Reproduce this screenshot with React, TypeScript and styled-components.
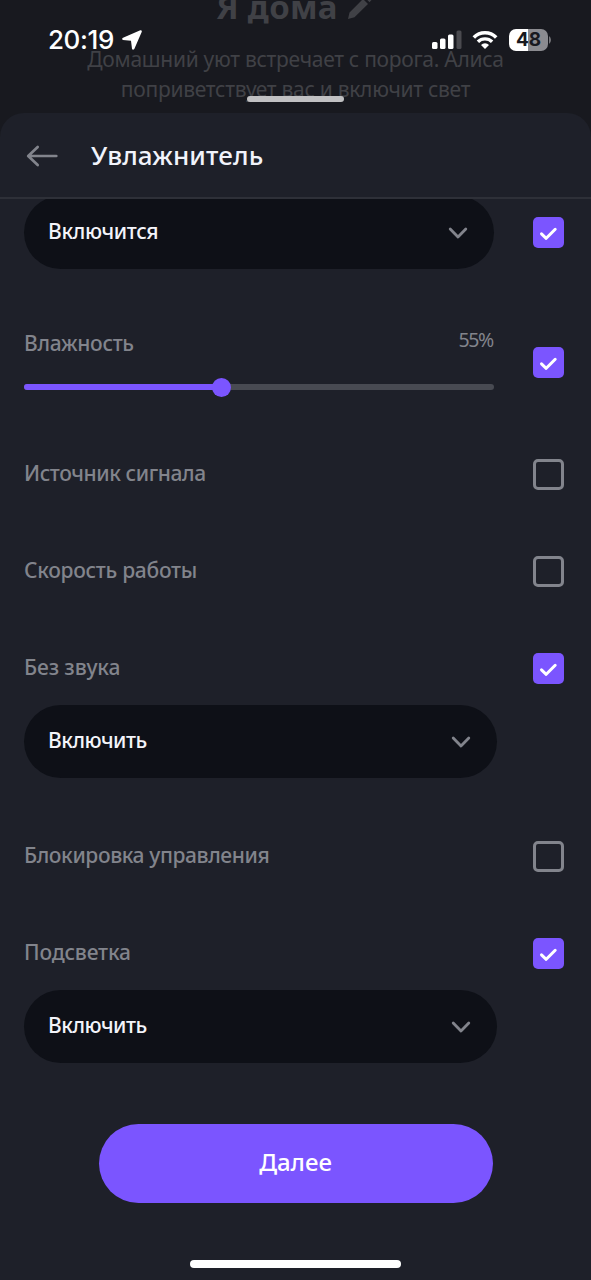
import React from "react";
import styled, { createGlobalStyle } from "styled-components";

const GlobalStyle = createGlobalStyle`
  * { box-sizing: border-box; }
  body { margin: 0; background: #18191f; }
`;

const Screen = styled.div`
  position: relative;
  display: flex;
  flex-direction: column;
  width: 591px;
  height: 1280px;
  overflow: hidden;
  background: #18191f;
  font-family: "Noto Sans", "Open Sans", sans-serif;
  font-weight: 500;
`;

const Backdrop = styled.div`
  position: relative;
  height: 113px;
  flex: none;
  text-align: center;
  color: #404146;
`;

const SceneTitle = styled.div`
  display: flex;
  justify-content: center;
  align-items: center;
  gap: 9px;
  height: 42px;
  margin: -14px 3px 0 0;
  font-size: 33px;
  font-weight: 700;
  line-height: 42px;
  letter-spacing: 0.3px;
`;

const SceneText = styled.div`
  height: 30px;
  font-size: 21px;
  font-weight: 400;
  line-height: 30px;
  letter-spacing: -0.28px;
  white-space: nowrap;
`;

const SceneCopy = styled.div`
  margin-top: 16px;
`;

const StatusBar = styled.div`
  position: absolute;
  inset: 24px 40px auto 48px;
  display: flex;
  align-items: center;
  height: 32px;
  color: #fff;
`;

const Clock = styled.span`
  font-family: Inter, sans-serif;
  font-size: 26px;
  font-weight: 550;
  line-height: 32px;
  letter-spacing: -0.4px;
  margin-right: 8px;
`;

const StatusIcons = styled.div`
  display: flex;
  align-items: center;
  margin-left: auto;
`;

const WifiIcon = styled.svg`
  margin-left: 10px;
`;

const Battery = styled.div`
  display: flex;
  align-items: center;
  justify-content: center;
  width: 39px;
  height: 22px;
  margin: 0 1px 0 11px;
  border-radius: 7px;
  background: linear-gradient(90deg, #fff 49%, #8b8b90 49%);
  color: #18191f;
  font-family: Inter, sans-serif;
  font-size: 19px;
  font-weight: 650;
  line-height: 22px;
`;

const Grabber = styled.div`
  position: absolute;
  left: 247px;
  top: 96px;
  width: 97px;
  height: 6px;
  border-radius: 3px;
  background: #c0c0c2;
`;

const Sheet = styled.main`
  display: flex;
  flex-direction: column;
  flex: 1;
  border-radius: 24px 24px 0 0;
  background: #1e2029;
  overflow: hidden;
`;

const Header = styled.header`
  display: flex;
  align-items: center;
  flex: none;
  height: 86px;
  padding-left: 26px;
  gap: 33px;
  border-bottom: 2px solid #2e3038;
`;

const BackIcon = styled.svg`
  margin-top: 2px;
`;

const Title = styled.h1`
  margin: 0;
  color: #f1f3fb;
  font-size: 26px;
  font-weight: 500;
  line-height: 36px;
  letter-spacing: 0.14px;
`;

const Settings = styled.div`
  display: flex;
  flex-direction: column;
  flex: none;
  height: 925px;
  padding: 0 27px 0 24px;
  overflow: hidden;
`;

const Row = styled.div<{ $gap?: number }>`
  display: flex;
  flex: none;
  align-items: center;
  justify-content: space-between;
  margin-top: ${(p) => p.$gap ?? 0}px;
`;

const Label = styled.span<{ $spacing?: number }>`
  color: #82848c;
  font-size: 21px;
  line-height: 27px;
  padding-bottom: 2px;
  letter-spacing: ${(p) => p.$spacing ?? 0}px;
`;

const Select = styled.div<{ $width: number; $gap?: number }>`
  display: flex;
  flex: none;
  align-items: center;
  justify-content: space-between;
  width: ${(p) => p.$width}px;
  height: 73px;
  margin-top: ${(p) => p.$gap ?? 0}px;
  padding: 0 26px 0 24px;
  border-radius: 37px;
  background: #0e1017;
`;

const SelectValue = styled.span<{ $spacing: number }>`
  color: #f3f4fa;
  font-size: 21px;
  line-height: 30px;
  padding-bottom: 3px;
  letter-spacing: ${(p) => p.$spacing}px;
`;

const ChevronIcon = styled.svg`
  margin-top: 1px;
`;

const CheckSquare = styled.div<{ $on: boolean }>`
  display: flex;
  flex: none;
  align-items: center;
  justify-content: center;
  width: 31px;
  height: 31px;
  border-radius: 5px;
  border: ${(p) => (p.$on ? "none" : "3px solid #82848c")};
  background: ${(p) => (p.$on ? "#7b55ff" : "transparent")};
`;

const SliderBlock = styled.div`
  width: 470px;
  height: 68px;
`;

const SliderCaption = styled.div`
  display: flex;
  justify-content: space-between;
  height: 30px;
  padding-top: 2px;
`;

const SliderValue = styled.span`
  color: #82848c;
  font-size: 19.5px;
  font-weight: 400;
  line-height: 20px;
  letter-spacing: -1.3px;
  padding-right: 1px;
`;

const Track = styled.div`
  display: flex;
  align-items: center;
  height: 6px;
  margin-top: 26px;
  border-radius: 3px;
  background: #484a52;
`;

const Fill = styled.div`
  width: 42%;
  height: 6px;
  border-radius: 3px;
  background: #7b55ff;
`;

const Thumb = styled.div`
  flex: none;
  width: 19px;
  height: 19px;
  margin-left: -9px;
  border-radius: 50%;
  background: #7b55ff;
`;

const NextButton = styled.button`
  flex: none;
  align-self: center;
  width: 394px;
  height: 79px;
  padding: 0 0 4px;
  border: 0;
  border-radius: 40px;
  background: #7b55ff;
  color: #fff;
  font-family: inherit;
  font-size: 24px;
  font-weight: 500;
`;

const HomeIndicator = styled.div`
  flex: none;
  align-self: center;
  width: 211px;
  height: 8px;
  margin-top: 57px;
  border-radius: 4px;
  background: #fff;
`;

const Checkbox = ({ on = false }: { on?: boolean }) => (
  <CheckSquare $on={on}>
    {on && (
      <svg width="31" height="31" viewBox="0 0 31 31" fill="none">
        <path d="M8.5 16.8 L13.2 21.3 L22.2 12.3" stroke="#fff" strokeWidth="3" strokeLinecap="round" strokeLinejoin="round" />
      </svg>
    )}
  </CheckSquare>
);

type DropdownProps = { value: string; width: number; gap?: number; spacing: number };

const Dropdown = ({ value, width, gap, spacing }: DropdownProps) => (
  <Select $width={width} $gap={gap}>
    <SelectValue $spacing={spacing}>{value}</SelectValue>
    <ChevronIcon width="20" height="14" viewBox="0 0 20 14" fill="none">
      <path d="M2.2 3 L10 11 L17.8 3" stroke="#82848c" strokeWidth="2.8" strokeLinecap="round" strokeLinejoin="round" />
    </ChevronIcon>
  </Select>
);

export default function App() {
  return (
    <>
      <GlobalStyle />
      <Screen>
        <Backdrop>
          <SceneTitle>
            Я дома
            <svg width="25" height="26" viewBox="0 0 25 26" fill="#404146">
              <path d="M1 25 L2.5 18.5 L16 5 L21 10 L7.5 23.3 Z M17.7 3.3 L20 1 Q21.5 0 23 1.5 L24.3 3 Q25.5 4.5 24.5 6 L22.5 8.2 Z" />
            </svg>
          </SceneTitle>
          <SceneCopy>
            <SceneText>Домашний уют встречает с порога. Алиса</SceneText>
            <SceneText>поприветствует вас и включит свет</SceneText>
          </SceneCopy>
          <StatusBar>
            <Clock>20:19</Clock>
            <svg width="20" height="20" viewBox="0 0 20 20" fill="#fff">
              <path d="M18.3 0.3 L1 7.8 Q-0.7 9 1 10 L9 10.8 L10 18.8 Q10.8 20.6 12.3 19 L19.8 1.8 Q20 0 18.3 0.3 Z" />
            </svg>
            <StatusIcons>
              <svg width="31" height="20" viewBox="0 0 31 20" fill="#fff">
                <rect x="1" y="12" width="5.5" height="7" rx="1.5" />
                <rect x="9" y="8.5" width="5.5" height="10.5" rx="1.5" />
                <rect x="17" y="4.5" width="5.5" height="14.5" rx="1.5" />
                <rect x="25.5" y="0.5" width="5" height="18.5" rx="1.5" fill="#4a4a4f" />
              </svg>
              <WifiIcon width="26" height="20" viewBox="0 0 26 20" fill="none">
                <path d="M1.8 7.4 A15.8 15.8 0 0 1 24.2 7.4" stroke="#fff" strokeWidth="3.6" />
                <path d="M5.9 11.8 A10 10 0 0 1 20.1 11.8" stroke="#fff" strokeWidth="3.4" />
                <path d="M9 14.9 A5.6 5.6 0 0 1 17 14.9 L13 19 Z" fill="#fff" />
              </WifiIcon>
              <Battery>48</Battery>
              <svg width="2" height="8" viewBox="0 0 2 8">
                <path d="M0 0 Q2 1.5 2 4 Q2 6.5 0 8 Z" fill="#77777c" />
              </svg>
            </StatusIcons>
          </StatusBar>
          <Grabber />
        </Backdrop>
        <Sheet>
          <Header>
            <BackIcon width="32" height="22" viewBox="0 0 32 22" fill="none">
              <path d="M11.7 2 L2.2 11 L11.7 20 M2.5 11 H30.3" stroke="#82848c" strokeWidth="2.7" strokeLinecap="round" strokeLinejoin="round" />
            </BackIcon>
            <Title>Увлажнитель</Title>
          </Header>
          <Settings>
            <Row $gap={-3}>
              <Dropdown value="Включится" width={470} spacing={-0.35} />
              <Checkbox on />
            </Row>
            <Row $gap={59}>
              <SliderBlock>
                <SliderCaption>
                  <Label $spacing={-0.3}>Влажность</Label>
                  <SliderValue>55%</SliderValue>
                </SliderCaption>
                <Track>
                  <Fill />
                  <Thumb />
                </Track>
              </SliderBlock>
              <Checkbox on />
            </Row>
            <Row $gap={63}>
              <Label $spacing={-0.4}>Источник сигнала</Label>
              <Checkbox />
            </Row>
            <Row $gap={66}>
              <Label $spacing={-0.28}>Скорость работы</Label>
              <Checkbox />
            </Row>
            <Row $gap={66}>
              <Label $spacing={-0.1}>Без звука</Label>
              <Checkbox on />
            </Row>
            <Dropdown value="Включить" width={473} gap={21} spacing={-0.48} />
            <Row $gap={63}>
              <Label $spacing={-0.4}>Блокировка управления</Label>
              <Checkbox />
            </Row>
            <Row $gap={66}>
              <Label $spacing={-0.17}>Подсветка</Label>
              <Checkbox on />
            </Row>
            <Dropdown value="Включить" width={473} gap={21} spacing={-0.48} />
          </Settings>
          <NextButton>Далее</NextButton>
          <HomeIndicator />
        </Sheet>
      </Screen>
    </>
  );
}
